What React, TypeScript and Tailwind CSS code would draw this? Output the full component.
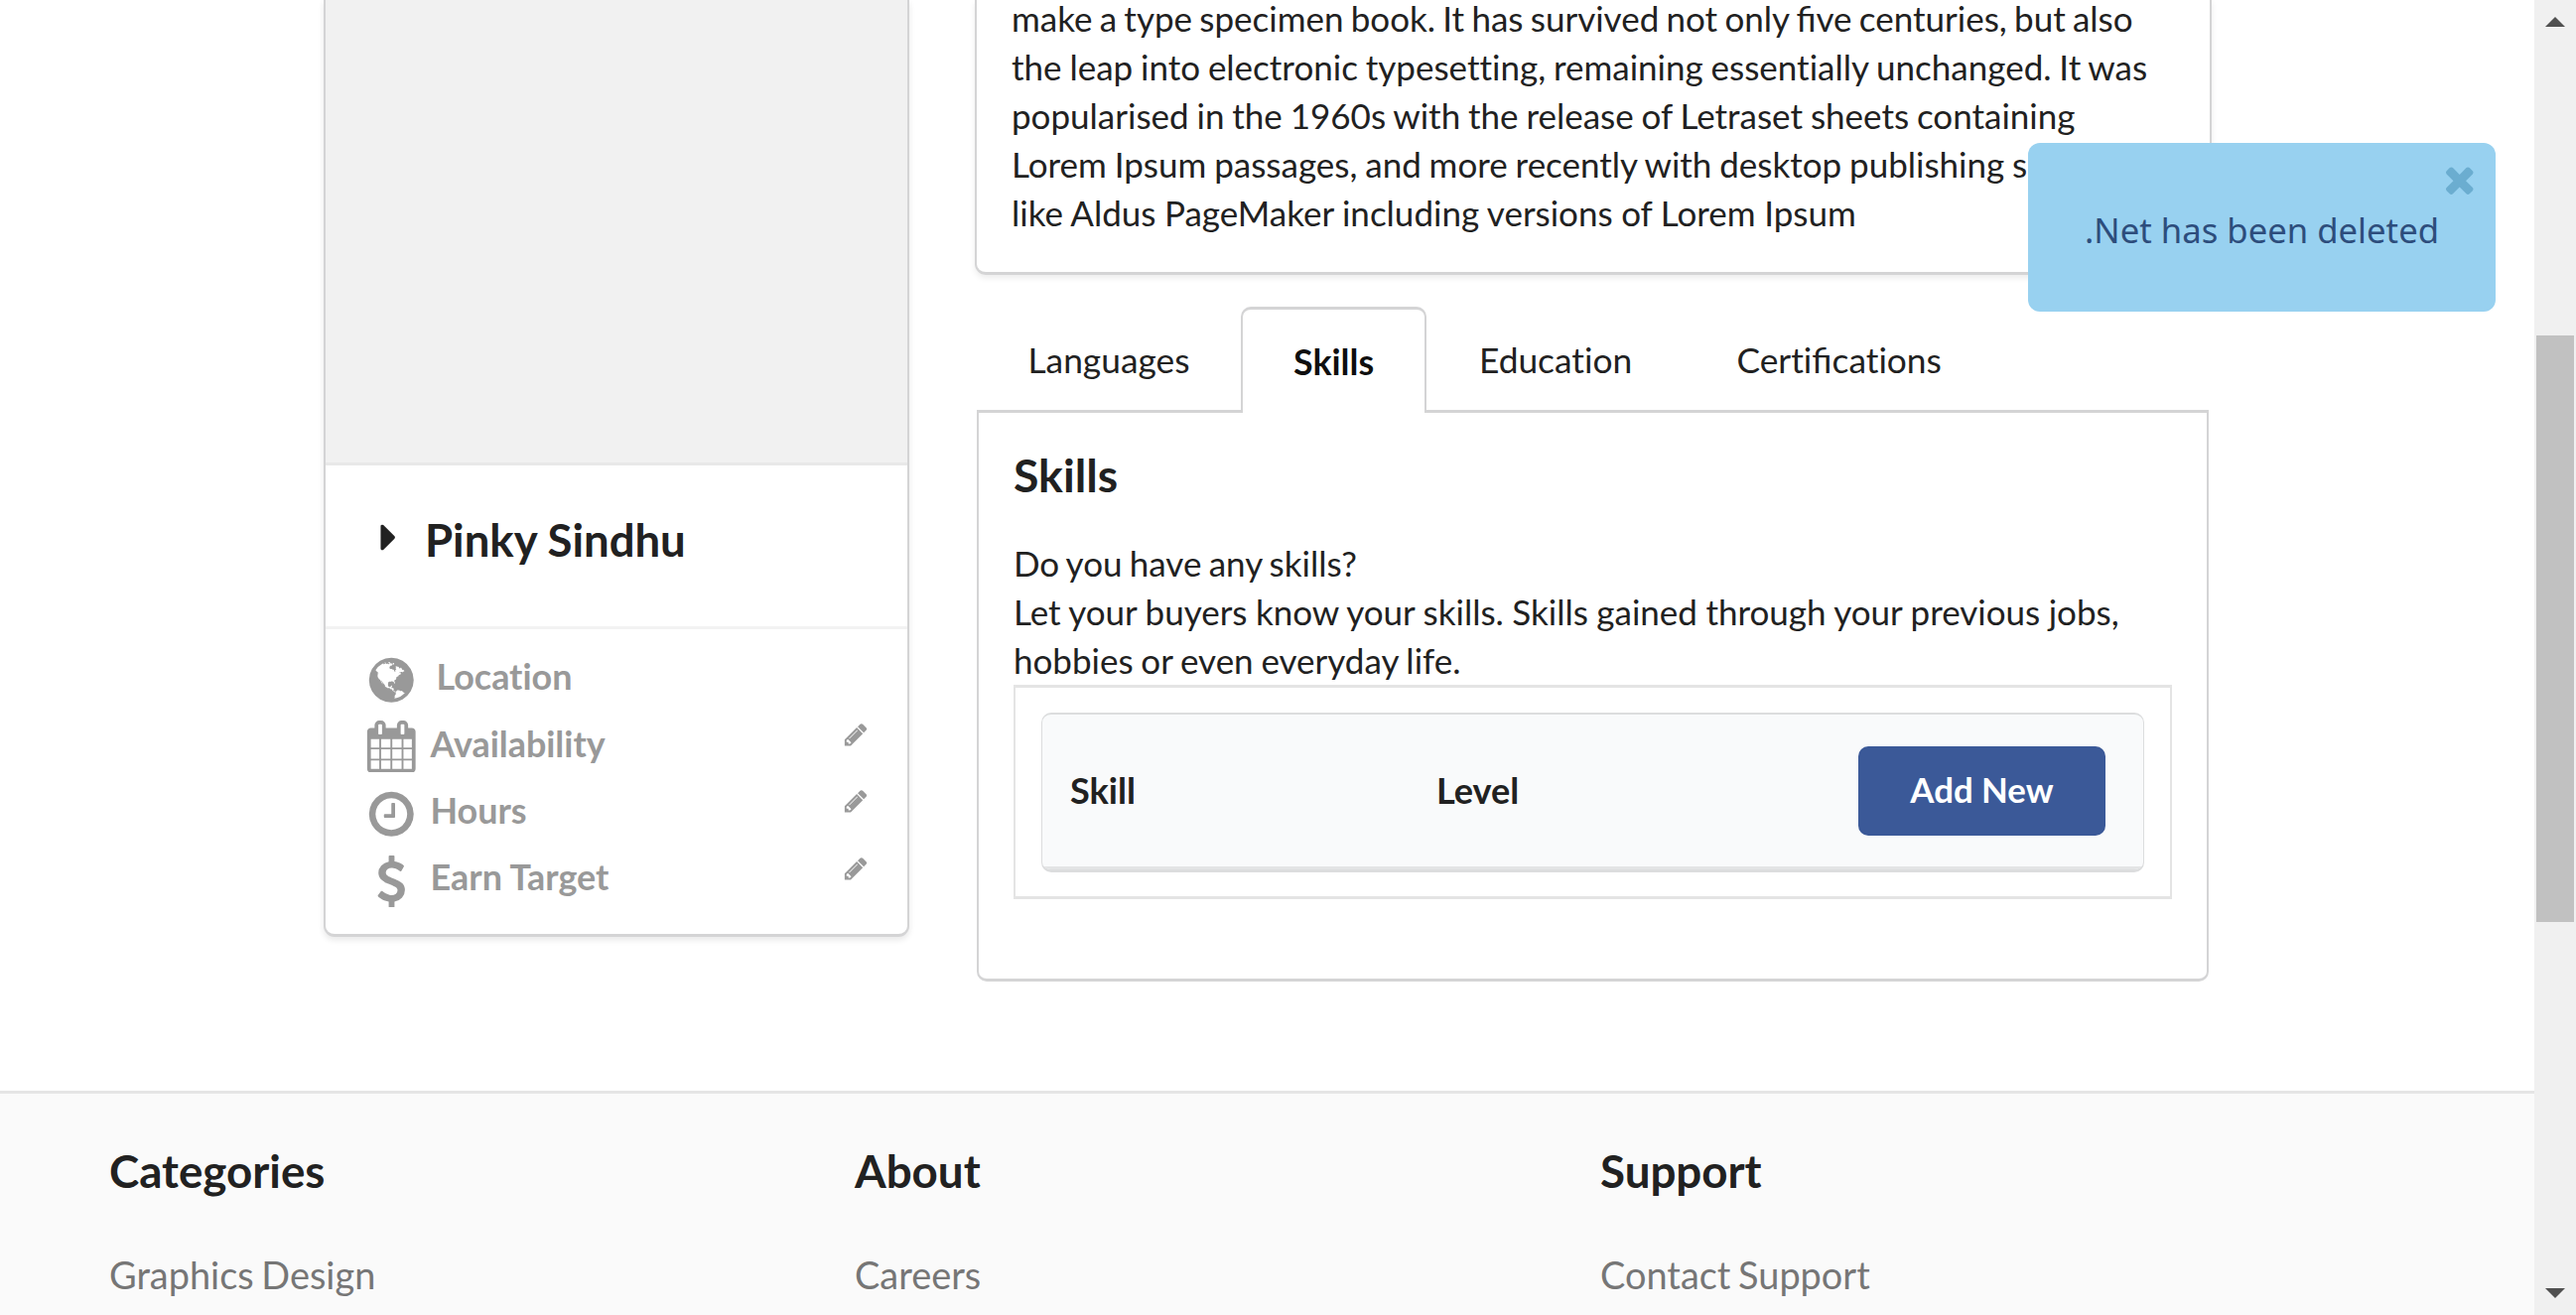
import React from "react";

const ICONS = {
  globe:
    "M896 128q209 0 385.5 103t279.5 279.5 103 385.5-103 385.5-279.5 279.5-385.5 103-385.5-103-279.5-279.5-103-385.5 103-385.5 279.5-279.5 385.5-103zm274 521q-2 1-9.5 9.5t-13.5 9.5q2 0 4.5-5t5-11 3.5-7q6-7 22-15 14-6 52-12 34-8 51 11-2-2 9.5-13t14.5-12q3-2 15-4.5t15-7.5l2-22q-12 1-17.5-7t-6.5-21q0 2-6 8 0-7-4.5-8t-11.5 1-9 1q-10-3-15-7.5t-8-16.5-4-15q-2-5-9.5-10.5t-9.5-10.5q-1-2-2.5-5.5t-3-6.5-4-5.5-5.5-2.5-7 5-7.5 10-4.5 5q-3-2-6-1.5t-4.5 1-4.5 3-5 3.5q-3 2-8.5 3t-8.5 2q15-5-1-11-10-4-16-3 9-4 7.5-12t-8.5-14h5q-1-4-8.5-8.5t-17.5-8.5-13-6q-8-5-34-9.5t-33-.5q-5 6-4.5 10.5t4 14 3.5 12.5q1 6-5.5 13t-6.5 12q0 7 14 15.5t10 21.5q-3 8-16 16t-16 12q-5 8-1.5 18.5t10.5 16.5q2 2 1.5 4t-3.5 4.5-5.5 4-6.5 3.5l-3 2q-11 5-20.5-6t-13.5-26q-7-25-16-30-23-8-29 1-5-13-41-26-25-9-58-4 6-1 0-15-7-15-19-12 3-6 4-17.5t1-13.5q3-13 12-23 1-1 7-8.5t9.5-13.5.5-6q35 4 50-11 5-5 11.5-17t10.5-17q9-6 14-5.5t14.5 5.5 14.5 5q14 1 15.5-11t-7.5-20q12 1 3-17-4-7-8-9-12-4-27 5-8 4 2 8-1-1-9.5 10.5t-16.5 17.5-16-5q-1-1-5.5-13.5t-9.5-13.5q-8 0-16 15 3-8-11-15t-24-8q19-12-8-27-7-4-20.5-5t-19.5 4q-5 7-5.5 11.5t5 8 10.5 5.5 11.5 4 8.5 3q14 10 8 14-2 1-8.5 3.5t-11.5 4.5-6 4q-3 4 0 14t-2 14q-5-5-9-17.5t-7-16.5q7 9-25 6l-10-1q-4 0-16 2t-20.5 1-13.5-8q-4-8 0-20 1-4 4-2-4-3-11-9.5t-10-8.5q-46 15-94 41 6 1 12-1 5-2 13-6.5t10-5.5q34-14 42-7l5-5q14 16 20 25-7-4-30-1-20 6-22 12 7 12 5 18-4-3-11.5-10t-14.5-11-15-5q-16 0-22 1-146 80-235 222 7 7 12 8 4 1 5 9t2.5 11 11.5-3q9 8 3 19 1-1 44 27 19 17 21 21 3 11-10 18-1-2-9-9t-9-4q-3 5 .5 18.5t10.5 12.5q-7 0-9.5 16t-2.5 35.5-1 23.5l2 1q-3 12 5.5 34.5t21.5 19.5q-13 3 20 43 6 8 8 9 3 2 12 7.5t15 10 10 10.5q4 5 10 22.5t14 23.5q-2 6 9.5 20t10.5 23q-1 0-2.5 1t-2.5 1q3 7 15.5 14t15.5 13q1 3 2 10t3 11 8 2q2-20-24-62-15-25-17-29-3-5-5.5-15.5t-4.5-14.5q2 0 6 1.5t8.5 3.5 7.5 4 2 3q-3 7 2 17.5t12 18.5 17 19 12 13q6 6 14 19.5t0 13.5q9 0 20 10.5t17 19.5q5 8 8 26t5 24q2 7 8.5 13.5t12.5 9.5l16 8 13 7q5 2 18.5 10.5t21.5 11.5q10 4 16 4t14.5-2.5 13.5-3.5q15-2 29 15t21 21q36 19 55 11-2 1 .5 7.5t8 15.5 9 14.5 5.5 8.5q5 6 18 15t18 15q6-4 7-9-3 8 7 20t18 10q14-3 14-32-31 15-49-18 0-1-2.5-5.5t-4-8.5-2.5-8.5 0-7.5 5-3q9 0 10-3.5t-2-12.5-4-13q-1-8-11-20t-12-15q-5 9-16 8t-16-9q0 1-1.5 5.5t-1.5 6.5q-13 0-15-1 1-3 2.5-17.5t3.5-22.5q1-4 5.5-12t7.5-14.5 4-12.5-4.5-9.5-17.5-2.5q-19 1-26 20-1 3-3 10.5t-5 11.5-9 7q-7 3-24 2t-24-5q-13-8-22.5-29t-9.5-37q0-10 2.5-26.5t3-25-5.5-24.5q3-2 9-9.5t10-10.5q2-1 4.5-1.5t4.5 0 4-1.5 3-6q-1-1-4-3-3-3-4-3 7 3 28.5-1.5t27.5 1.5q15 11 22-2 0-1-2.5-9.5t-.5-13.5q5 27 29 9 3 3 15.5 5t17.5 5q3 2 7 5.5t5.5 4.5 5-.5 8.5-6.5q10 14 12 24 11 40 19 44 7 3 11 2t4.5-9.5 0-14-1.5-12.5l-1-8v-18l-1-8q-15-3-18.5-12t1.5-18.5 15-18.5q1-1 8-3.5t15.5-6.5 12.5-8q21-19 15-35 7 0 11-9-1 0-5-3t-7.5-5-4.5-2q9-5 2-16 5-3 7.5-11t7.5-10q9 12 21 2 8-8 1-16 5-7 20.5-10.5t18.5-9.5q7 2 8-2t1-12 3-12q4-5 15-9t13-5l17-11q3-4 0-4 18 2 31-11 10-11-6-20 3-6-3-9.5t-15-5.5q3-1 11.5-.5t10.5-1.5q15-10-7-16-17-5-43 12zm-163 877q206-36 351-189-3-3-12.5-4.5t-12.5-3.5q-18-7-24-8 1-7-2.5-13t-8-9-12.5-8-11-7q-2-2-7-6t-7-5.5-7.5-4.5-8.5-2-10 1l-3 1q-3 1-5.5 2.5t-5.5 3-4 3 0 2.5q-21-17-36-22-5-1-11-5.5t-10.5-7-10-1.5-11.5 7q-5 5-6 15t-2 13q-7-5 0-17.5t2-18.5q-3-6-10.5-4.5t-12 4.5-11.5 8.5-9 6.5-8.5 5.5-8.5 7.5q-3 4-6 12t-5 11q-2-4-11.5-6.5t-9.5-5.5q2 10 4 35t5 38q7 31-12 48-27 25-29 40-4 22 12 26 0 7-8 20.5t-7 21.5q0 6 2 16z",
  calendar:
    "M192 1664h288v-288h-288v288zm352 0h320v-288h-320v288zm-352-352h288v-320h-288v320zm352 0h320v-320h-320v320zm-352-384h288v-288h-288v288zm736 736h320v-288h-320v288zm-384-736h320v-288h-320v288zm768 736h288v-288h-288v288zm-384-352h320v-320h-320v320zm-352-864v-288q0-13-9.5-22.5t-22.5-9.5h-64q-13 0-22.5 9.5t-9.5 22.5v288q0 13 9.5 22.5t22.5 9.5h64q13 0 22.5-9.5t9.5-22.5zm736 864h288v-320h-288v320zm-384-384h320v-288h-320v288zm384 0h288v-288h-288v288zm32-480v-288q0-13-9.5-22.5t-22.5-9.5h-64q-13 0-22.5 9.5t-9.5 22.5v288q0 13 9.5 22.5t22.5 9.5h64q13 0 22.5-9.5t9.5-22.5zm384-64v1280q0 52-38 90t-90 38h-1408q-52 0-90-38t-38-90v-1280q0-52 38-90t90-38h128v-96q0-66 47-113t113-47h64q66 0 113 47t47 113v96h384v-96q0-66 47-113t113-47h64q66 0 113 47t47 113v96h128q52 0 90 38t38 90z",
  clock:
    "M1024 544v448q0 14-9 23t-23 9h-320q-14 0-23-9t-9-23v-64q0-14 9-23t23-9h224v-352q0-14 9-23t23-9h64q14 0 23 9t9 23zm416 352q0-148-73-273t-198-198-273-73-273 73-198 198-73 273 73 273 198 198 273 73 273-73 198-198 73-273zm224 0q0 209-103 385.5t-279.5 279.5-385.5 103-385.5-103-279.5-279.5-103-385.5 103-385.5 279.5-279.5 385.5-103 385.5 103 279.5 279.5 103 385.5z",
  dollar:
    "M1362 1185q0 153-99.5 263.5t-258.5 136.5v175q0 14-9 23t-23 9h-135q-13 0-22.5-9.5t-9.5-22.5v-175q-66-9-127.5-31t-101.5-44.5-74-48-46.5-37.5-17.5-18q-17-21-2-41l103-135q7-10 23-12 15-2 24 9l2 2q113 99 243 125 37 8 74 8 81 0 142.5-43t61.5-122q0-28-15-53t-33.5-42-58.5-37.5-66-32-80-32.5q-39-16-61.5-25t-61.5-26.5-62.5-31-56.5-35.5-53.5-42.5-43.5-49-35.5-58-21-66.5-8.5-78q0-138 98-242t255-134v-180q0-13 9.5-22.5t22.5-9.5h135q14 0 23 9t9 23v176q57 6 110.5 23t87 33.5 63.5 37.5 39 29 15 14q17 18 5 38l-81 146q-8 15-23 16-14 3-27-7-3-3-14.5-12t-39-26.5-58.5-32-74.5-26-85.5-11.5q-95 0-155 43t-60 111q0 26 8.5 48t29.5 41.5 39.5 33 56 31 60.5 27 70 27.5q53 20 81 31.5t76 35 75.5 42.5 62 50 53 63.5 31.5 76.5 13 94z",
  pencil:
    "M491 1536l91-91-235-235-91 91v107h128v128h107zm523-928q0-22-22-22-10 0-17 7l-542 542q-7 7-7 17 0 22 22 22 10 0 17-7l542-542q7-7 7-17zm-54-192l416 416-832 832h-416v-416zm683 96q0 53-37 90l-166 166-416-416 166-165q36-38 90-38 53 0 91 38l235 234q37 39 37 91z",
  close:
    "M1490 1322q0 40-28 68l-136 136q-28 28-68 28t-68-28l-294-294-294 294q-28 28-68 28t-68-28l-136-136q-28-28-28-68t28-68l294-294-294-294q-28-28-28-68t28-68l136-136q28-28 68-28t68 28l294 294 294-294q28-28 68-28t68 28l136 136q28 28 28 68t-28 68l-294 294 294 294q28 28 28 68z",
  caret:
    "M1152 896q0 26-19 45l-448 448q-19 19-45 19t-45-19-19-45v-896q0-26 19-45t45-19 45 19l448 448q19 19 19 45z",
};

function Icon({ name, className }: { name: keyof typeof ICONS; className: string }) {
  return (
    <svg viewBox="0 0 1792 1792" fill="currentColor" className={className} aria-hidden="true">
      <path d={ICONS[name]} />
    </svg>
  );
}

// Keeps the "fi" ligature while every other ligature stays off.
function Ligated({ text }: { text: string }) {
  const parts = text.split("fi");
  return (
    <>
      {parts.map((part, i) => (
        <React.Fragment key={i}>
          {i > 0 && <span className="[font-variant-ligatures:common-ligatures]">fi</span>}
          {part}
        </React.Fragment>
      ))}
    </>
  );
}

const DETAILS: { icon: keyof typeof ICONS; label: string; pad: string; iconPad: string; editable: boolean }[] = [
  { icon: "globe", label: "Location", pad: "ml-[19px]", iconPad: "mt-[7px]", editable: false },
  { icon: "calendar", label: "Availability", pad: "ml-[13px]", iconPad: "mt-[6px]", editable: true },
  { icon: "clock", label: "Hours", pad: "ml-[13px]", iconPad: "mt-[8px]", editable: true },
  { icon: "dollar", label: "Earn Target", pad: "ml-[13px]", iconPad: "mt-[8px]", editable: true },
];

function ProfileCard() {
  return (
    <aside className="ml-[326px] h-[944px] w-[590px] shrink-0 overflow-hidden rounded-b-[11px] border-x-2 border-b-[3px] border-[#d4d4d5] bg-white shadow-[0_3px_6px_0_#e8e8e8]">
      <div className="h-[469px] border-b-[3px] border-[#e8e8e8] bg-[#f1f1f1]" />
      <div className="flex h-[165px] items-start border-b-[3px] border-[#f2f2f2] pt-[47px]">
        <Icon name="caret" className="mt-[3px] ml-[41px] size-[45px]" />
        <h3 className="ml-[14px] text-[45.5px] leading-[55px] font-bold">Pinky Sindhu</h3>
      </div>
      <ul className="pt-[14px] text-[#999999]">
        {DETAILS.map((d) => (
          <li key={d.label} className="flex h-[67.4px] items-center pr-[39px] pl-[40px]">
            <Icon name={d.icon} className={`${d.iconPad} size-[52.5px]`} />
            <span className={`${d.pad} flex-1 text-[35.9px] leading-[67px] font-bold`}>{d.label}</span>
            {d.editable && <Icon name="pencil" className="mb-[18px] size-[26.3px]" />}
          </li>
        ))}
      </ul>
    </aside>
  );
}

const DESCRIPTION = [
  { text: "make a type specimen book. It has survived not only five centuries, but also", spacing: "[word-spacing:-1.7px]" },
  { text: "the leap into electronic typesetting, remaining essentially unchanged. It was", spacing: "[word-spacing:-1.1px]" },
  { text: "popularised in the 1960s with the release of Letraset sheets containing", spacing: "[word-spacing:-1.1px]" },
  { text: "Lorem Ipsum passages, and more recently with desktop publishing software", spacing: "[word-spacing:-1.1px]" },
  { text: "like Aldus PageMaker including versions of Lorem Ipsum", spacing: "[word-spacing:-0.4px]" },
];

function Description() {
  return (
    <section className="-ml-[2px] h-[277px] w-[1246px] rounded-b-[11px] border-x-2 border-b-[3px] border-[#d4d4d5] pl-[35px] shadow-[0_3px_6px_0_#ececec]">
      <p className="-mt-[6px] text-[35px] leading-[49.1px] whitespace-nowrap">
        {DESCRIPTION.map((line) => (
          <span key={line.text} className={`block ${line.spacing}`}>
            <Ligated text={line.text} />
          </span>
        ))}
      </p>
    </section>
  );
}

function Tabs() {
  return (
    <nav className="mt-[32px] flex h-[107px] text-[35.3px] leading-[108px] whitespace-nowrap">
      <a className="w-[266px] pl-[51.5px]">Languages</a>
      <a className="z-10 h-[107px] w-[187px] rounded-t-[10px] border-x-2 border-t-[3px] border-[#d4d4d5] bg-white pl-[51px] text-[35.8px] leading-[105px] font-bold text-black/95">
        Skills
      </a>
      <a className="w-[261px] pl-[53px]">Education</a>
      <a className="pl-[51.5px]">
        <Ligated text="Certifications" />
      </a>
    </nav>
  );
}

function SkillsPanel() {
  return (
    <section className="-mt-[3px] h-[576px] w-[1241px] rounded-b-[10px] border-x-2 border-y-[3px] border-[#d4d4d5] px-[35px]">
      <h3 className="mt-[35px] text-[46.4px] leading-[55px] font-bold">Skills</h3>
      <p className="mt-[37px] text-[35px] leading-[49px] whitespace-nowrap">
        <span className="block [word-spacing:-1.7px]">Do you have any skills?</span>
        <span className="block [word-spacing:-0.5px]">
          Let your buyers know your skills. Skills gained through your previous jobs,
        </span>
        <span className="block [word-spacing:-1.2px]">hobbies or even everyday life.</span>
      </p>
      <div className="h-[216px] w-[1167px] border-x-2 border-y-[3px] border-[#e4e4e4] pt-[25px] pl-[26px]">
        <div className="h-[161px] w-[1111px] overflow-hidden rounded-[10px] border-x-[1.5px] border-t-2 border-b-[3px] border-[#dcddde] bg-[#f9fafb]">
          <div className="flex h-[156px] items-center border-b-[3px] border-[#e3e4e5] pl-[28px] text-[36.1px] font-bold">
            <span className="w-[369px]">Skill</span>
            <span className="w-[425px]">Level</span>
            <button className="h-[90px] w-[249px] rounded-[10px] bg-[#3b5998] text-[34.8px] text-white">Add New</button>
          </div>
        </div>
      </div>
    </section>
  );
}

const FOOTER = [
  { title: "Categories", link: "Graphics Design" },
  { title: "About", link: "Careers" },
  { title: "Support", link: "Contact Support" },
];

function Footer() {
  return (
    <footer className="flex h-[226px] shrink-0 border-t-[3px] border-[#e5e5e5] bg-[#fafafa] pl-[110px]">
      {FOOTER.map((col) => (
        <div key={col.title} className="w-[751px] shrink-0">
          <h4 className="mt-[50px] text-[45.7px] leading-[56px] font-bold">{col.title}</h4>
          <a className="mt-[50px] block text-[37.9px] leading-[54px] [word-spacing:-2px] text-[#767676]">{col.link}</a>
        </div>
      ))}
    </footer>
  );
}

function Scrollbar() {
  return (
    <div className="flex h-full w-[42px] flex-col items-center bg-[#f0f0f0]">
      <svg viewBox="0 0 20 10" className="mt-[17px] h-[10px] w-[20px]" fill="#505050">
        <path d="M0 10L10 0L20 10Z" />
      </svg>
      <div className="mt-[311px] h-[591px] w-[38px] bg-[#c1c1c1]" />
      <svg viewBox="0 0 20 10" className="mt-[369px] h-[10px] w-[20px]" fill="#505050">
        <path d="M0 0L10 10L20 0Z" />
      </svg>
    </div>
  );
}

function Toast() {
  return (
    <div className="absolute top-[144px] left-[2043px] z-20 h-[170px] w-[471px] rounded-[12px] bg-[#98d1f0]">
      <Icon name="close" className="absolute top-[16px] right-[16px] size-[41.5px] text-[#6badd0]" />
      <p className="pt-[63px] pl-[57px] font-['Noto_Sans',sans-serif] text-[34.7px] leading-[50px] whitespace-nowrap text-[#2d4d7c]">
        .Net has been deleted
      </p>
    </div>
  );
}

export default function App() {
  return (
    <div className="relative flex h-[1325px] w-[2595px] overflow-hidden bg-white font-['Lato',sans-serif] text-[#212121] [font-variant-ligatures:none]">
      <div className="flex w-[2553px] flex-col">
        <main className="flex h-[1099px] items-start">
          <ProfileCard />
          <div className="ml-[68px] flex flex-col">
            <Description />
            <Tabs />
            <SkillsPanel />
          </div>
        </main>
        <Footer />
      </div>
      <Scrollbar />
      <Toast />
    </div>
  );
}
